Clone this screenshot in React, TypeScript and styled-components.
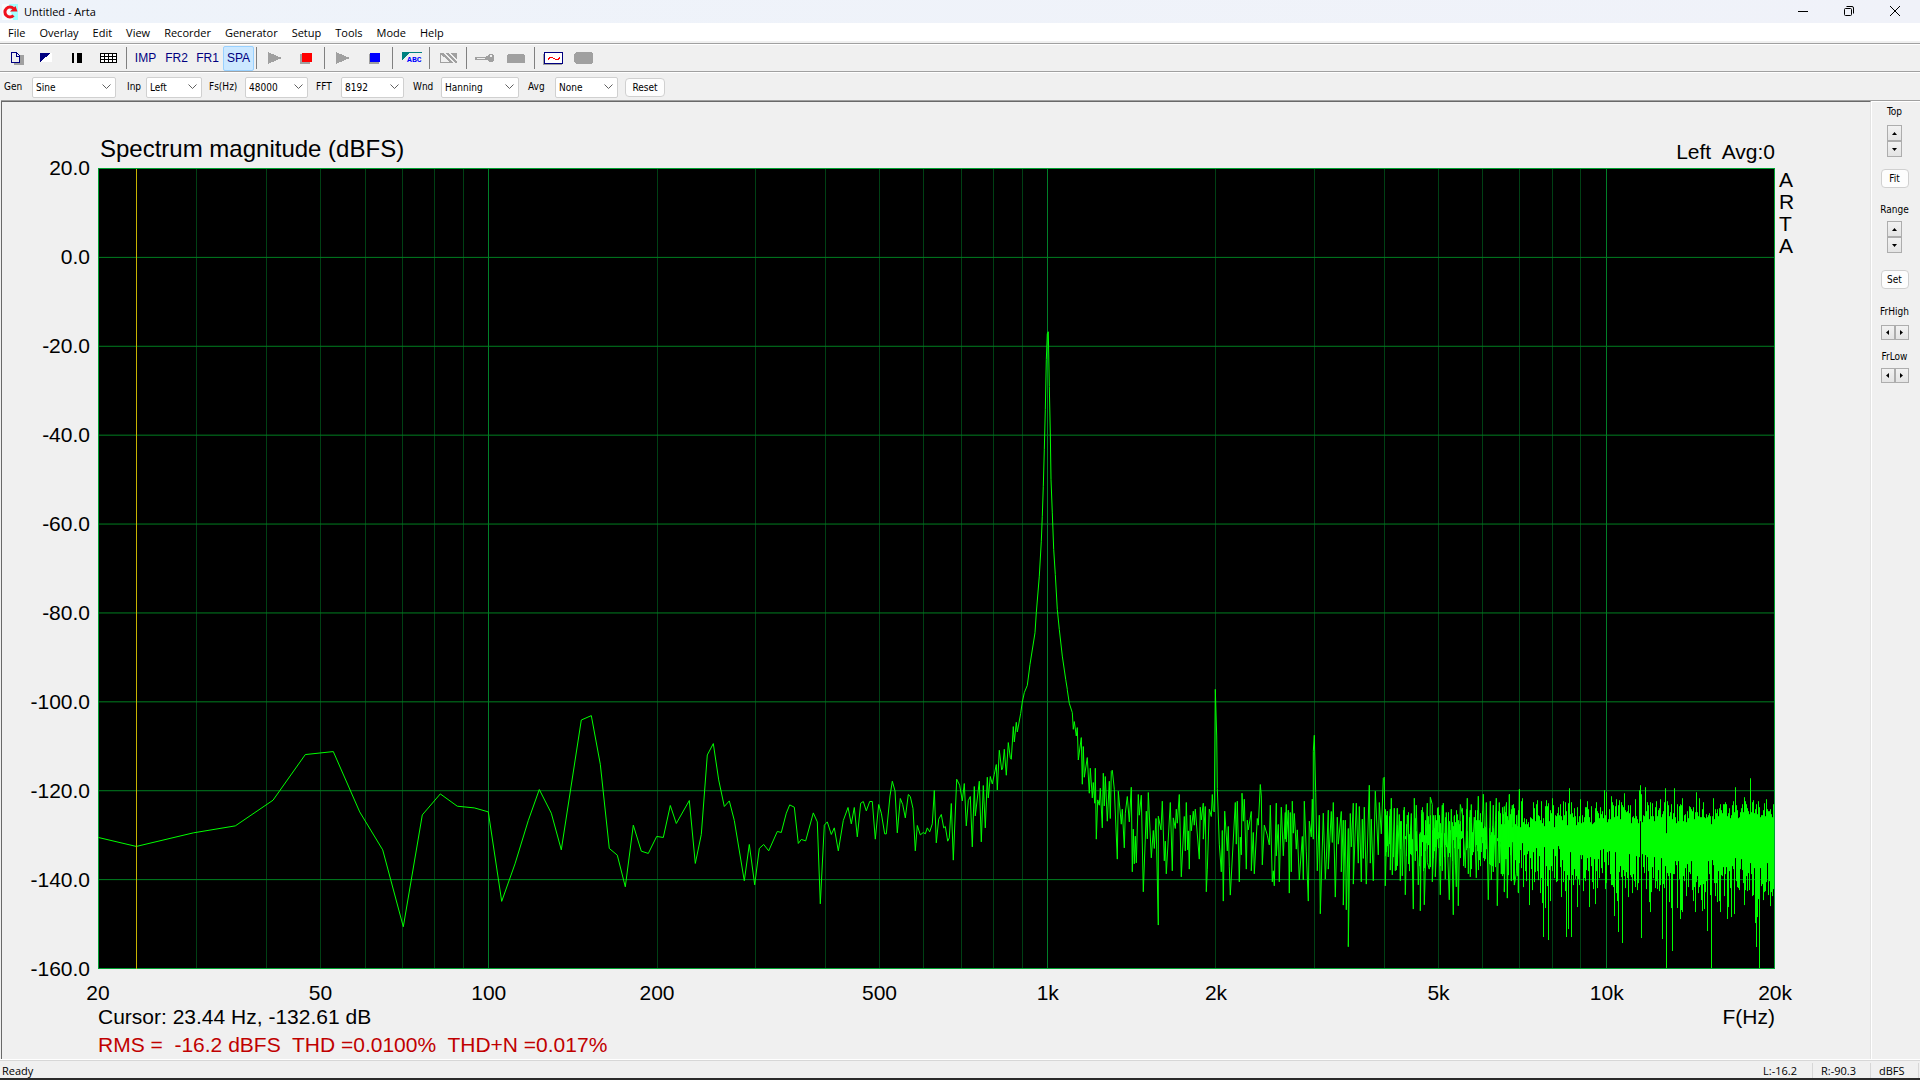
import React from "react";
import styled, { createGlobalStyle, css } from "styled-components";

const ui = `"Open Sans", "Noto Sans", sans-serif`;
const compact = `"DejaVu Sans Condensed", "DejaVu Sans", sans-serif`;
const chartFont = `"Liberation Sans", Arial, sans-serif`;

const Global = createGlobalStyle`
  * { box-sizing: border-box; }
  body { margin: 0; background: #f0f0f0; color: #000; font-family: ${ui}; }
  button, select { font: inherit; color: inherit; }
`;

/* ---------- window frame ---------- */

const Window = styled.div`
  display: flex;
  flex-direction: column;
  min-height: 100vh;
  border-bottom: 2px solid #2b2b2b;
  background: #f0f0f0;
`;

const TitleBar = styled.header`
  display: flex;
  align-items: center;
  height: 23px;
  padding: 0 2px;
  background: linear-gradient(90deg, #eef3fa, #f0f2f9);
`;

const Title = styled.h1`
  flex: 1;
  margin: 0;
  padding-left: 6px;
  font-size: 11px;
  font-weight: 400;
  line-height: 16px;
`;

const CaptionButton = styled.button`
  display: grid;
  place-items: center;
  width: 46px;
  height: 22px;
  padding: 0 0 2px;
  border: 0;
  background: transparent;
`;

const MenuBar = styled.nav`
  display: flex;
  height: 18px;
  padding-left: 1px;
  background: #fff;
`;

const MenuItem = styled.button`
  padding: 1px 7px 0;
  border: 0;
  background: transparent;
  font-size: 11px;
  line-height: 18px;
`;

/* ---------- toolbars ---------- */

const ToolBar = styled.div`
  display: flex;
  align-items: center;
  height: 28px;
  border-top: 1px solid #a0a0a0;
  box-shadow: inset 0 1px #fff;
`;

const IconBar = styled(ToolBar)`
  margin-top: 2px;
  padding-top: 1px;
`;

const ControlBar = styled(ToolBar)`
  height: 30px;
  padding: 1px 4px 0;
  font-family: ${compact};
  font-size: 10px;
`;

const ToolButton = styled.button<{ $active?: boolean }>`
  display: grid;
  place-items: center;
  width: 31px;
  height: 25px;
  padding: 0;
  border: 1px solid transparent;
  border-radius: 2px;
  background: transparent;
  color: #000080;
  font-family: ${chartFont};
  font-size: 12px;
  > svg { margin-right: 2px; }
  ${(p) =>
    p.$active &&
    css`
      border-color: #99d1ff;
      background: #cce8ff;
    `}
`;

const Separator = styled.i`
  width: 6px;
  height: 22px;
  background: linear-gradient(#808080, #808080) 2px 0 / 1px 100% no-repeat;
`;

const Field = styled.div<{ $lead: number }>`
  display: flex;
  align-items: center;
  margin-left: ${(p) => p.$lead}px;
`;

const FieldLabel = styled.label<{ $width: number }>`
  width: ${(p) => p.$width}px;
  padding-bottom: 1px;
  white-space: nowrap;
`;

const SelectBox = styled.span<{ $width: number }>`
  display: grid;
  width: ${(p) => p.$width}px;
  height: 21px;
  > * { grid-area: 1 / 1; }
  > svg { place-self: center end; margin-right: 5px; pointer-events: none; }
`;

const Select = styled.select`
  appearance: none;
  width: 100%;
  height: 100%;
  padding: 0 16px 0 3px;
  border: 1px solid #d0d0d0;
  border-radius: 2px;
  background: #fff;
`;

const PushButton = styled.button<{ $width: number }>`
  width: ${(p) => p.$width}px;
  height: 19px;
  padding: 0;
  border: 1px solid #d0d0d0;
  border-radius: 4px;
  background: #fdfdfd;
  font-family: ${compact};
  font-size: 10px;
`;

/* ---------- chart ---------- */

const Workspace = styled.div`
  display: flex;
  flex: 1;
`;

const ChartPanel = styled.main`
  display: grid;
  flex: 1;
  grid-template: 66px 1fr 90px / 96px 1fr 95px;
  margin-left: 1px;
  border: 1px solid #e3e3e3;
  border-top-color: #696969;
  border-left-color: #696969;
  box-shadow: 0 -1px #a0a0a0;
  font-family: ${chartFont};
  font-size: 21px;
  line-height: 22px;
`;

const ChartHeader = styled.div`
  grid-column: 2;
  display: flex;
  align-items: flex-end;
  justify-content: space-between;
  padding-bottom: 5px;
  white-space: pre;
`;

const ChartTitle = styled.h2`
  margin: 0;
  padding: 0 0 3px 2px;
  font-size: 24px;
  font-weight: 400;
`;

const YAxis = styled.div`
  grid-area: 2 / 1;
  display: flex;
  flex-direction: column;
  justify-content: space-between;
  margin: -11px 0;
  padding-right: 8px;
  text-align: right;
`;

const Plot = styled.svg`
  grid-area: 2 / 2;
  display: block;
  width: 100%;
  height: 100%;
  min-height: 0;
  background: #000;
  contain: size;
`;

const Brand = styled.div`
  grid-area: 2 / 3;
  display: flex;
  flex-direction: column;
  padding: 1px 4px;
`;

const ChartFooter = styled.div`
  grid-area: 3 / 2;
  display: flex;
  flex-direction: column;
  padding-top: 12px;
  line-height: 24px;
  white-space: pre;
`;

const XAxis = styled.div`
  display: flex;
`;

const Tick = styled.span<{ $grow: number }>`
  flex: ${(p) => p.$grow} 0 0;
  width: 0;
`;

const TickLabel = styled.span`
  display: flex;
  justify-content: center;
  width: 0;
`;

const Readout = styled.div`
  display: flex;
  justify-content: space-between;
`;

const Distortion = styled.div`
  margin-top: 4px;
  color: #c00000;
`;

/* ---------- side panel ---------- */

const SidePanel = styled.aside`
  display: flex;
  flex-direction: column;
  align-items: center;
  width: 49px;
  padding: 4px 3px 0 0;
  border-left: 1px solid #fff;
  border-bottom: 1px solid #a0a0a0;
  box-shadow: inset 0 1px #fff, 0 -1px #a0a0a0;
  font-family: ${compact};
  font-size: 10px;
  line-height: 14px;
`;

const SideLabel = styled.span<{ $top?: number }>`
  margin-top: ${(p) => p.$top ?? 0}px;
`;

const Spinner = styled.span<{ $row?: boolean; $top: number }>`
  display: flex;
  flex-direction: ${(p) => (p.$row ? "row" : "column")};
  margin-top: ${(p) => p.$top}px;
`;

const SpinButton = styled.button<{ $row?: boolean }>`
  display: grid;
  place-items: center;
  width: ${(p) => (p.$row ? 14 : 15)}px;
  height: ${(p) => (p.$row ? 15 : 16)}px;
  padding: 0;
  border: 1px solid #adadad;
  background: linear-gradient(#f2f2f2, #e4e4e4);
`;

const SideAction = styled.span<{ $top: number }>`
  display: flex;
  margin-top: ${(p) => p.$top}px;
`;

/* ---------- status bar ---------- */

const StatusBar = styled.footer`
  display: flex;
  height: 18px;
  padding: 2px 1px 0 2px;
  border-top: 1px solid #d7d7d7;
  box-shadow: 0 -1px #fff;
  font-size: 11px;
  line-height: 15px;
`;

const Ready = styled.span`
  flex: 1;
`;

const StatusCell = styled.span<{ $width: number }>`
  width: ${(p) => p.$width}px;
  padding-left: 8px;
  border-right: 1px solid #d7d7d7;
  white-space: nowrap;
`;

/* ---------- spectrum data ---------- */

const PLOT_W = 1677;
const PLOT_H = 802;
const SPAN = PLOT_W - 1;
const xOf = (f: number) => Math.round((Math.log10(f / 20) / 3) * SPAN) + 0.5;

type Sweep = { x: number; y: number; data: string };

// Each sweep lists x,y pairs in thirds of a plot unit from its own origin.
const sweeps: Sweep[] = [
  { x: -8, y: 512, data: "25,475 139,502 310,461 436,440 549,363 646,226 730,217 809,398 878,512 940,743 997,407 1051,344 1102,381 1153,386 1170,391" },
  { x: 382, y: 512, data: "0,391 25,398 65,667 105,554 145,424 178,331 214,402 244,512 304,122 334,109 361,255 388,508 412,528 436,623 460,438 484,516 505,523 530,472 550,475 571,379 589,433 628,364 646,553 664,466 682,227 700,193 716,302 733,382 748,365 763,424 793,605 808,496 824,617 838,508 851,496 866,515 892,457 904,460 919,402 929,377 943,384 955,493 964,481 977,485 1000,401 1012,428 1021,674 1033,438 1042,428" },
  { x: 732, y: 512, data: "4,466 13,446 25,515 40,424 54,385 64,434 73,385 82,473 92,372 100,367 109,395 119,367 127,367 136,480 146,376 154,402 164,464 169,464 180,350 187,306 195,335 202,461 211,358 218,376 226,416 235,346 241,352 249,388 256,515 262,439 271,467 280,460 286,464 292,446 299,458 307,434 313,334 319,491 326,420 334,406 341,446 346,442 353,486 358,476 364,373 370,543 380,300 389,318 397,365 403,313 409,440 415,364 421,352 427,503 433,322 436,410 448,306 454,488 460,319 466,446 472,294 475,356 481,292 487,314 493,285 499,256 502,332 508,213 515,272 518,266 523,210 529,288 535,190 541,235 544,240 550,142 553,188 559,129 562,158 572,102 577,68 583,40" },
  { x: 882, y: 132, data: "142,1158 150,1095 165,1000 169,940 178,830 184,725 187,650 190,560 193,450 196,330 199,180 202,102 205,96 208,260 211,400 213,540 217,640 221,750 226,825 232,930 238,990 247,1070 257,1140 262,1170" },
  { x: 732, y: 512, data: "712,32 718,72 727,100 730,150 733,127 739,170 742,145 745,242 754,175 757,315 760,202 763,294 772,235 778,342 781,267 787,356 790,310 794,372 796,267 799,480 803,362 808,378 811,327 817,446 820,282 823,380 826,292 832,426 838,306 841,418 844,276 847,273 853,330 862,540 865,336 874,435 877,390 883,506 886,402 892,352 898,428 904,324 907,578 910,450 913,554 916,471 919,551 925,346 928,408 934,348 940,638 949,396 952,479 955,340 964,536 970,454 973,508 978,418 985,738 985,411 993,452 997,366 1003,545 1006,486 1009,584 1021,370 1027,575 1030,416 1036,448 1039,390 1042,432 1048,346 1054,593 1063,412 1066,515 1069,370 1073,512 1075,455 1078,570 1081,408 1084,455 1090,396 1093,438 1096,390 1108,540 1111,384 1114,422 1120,372 1120,480 1126,382 1129,638 1132,572 1138,390 1144,412 1147,346 1150,395 1153,398 1156,30 1160,170 1162,328 1168,495 1174,578 1177,454 1180,666 1184,396 1192,515 1195,442 1198,563" },
  { x: 1122, y: 532, data: "31,588 46,310 49,435 52,306 58,548 61,414 64,467 66,282 70,366 73,300 79,510 82,363 85,392 94,337 94,515 100,400 103,524 112,358 115,378 121,256 124,290 127,497 133,378 142,408 148,437 151,318 157,548 160,515 163,560 169,312 169,470 175,376 178,548 184,324 190,470 196,340 196,420 199,316 199,428 205,333 208,582 211,340 214,518 217,306 220,402 223,343 229,450 232,392 238,542 247,412 250,542 253,306 259,458 265,606 268,366 274,413 277,300 280,420 280,156 283,108 287,280 292,515 298,348 301,644 310,342 316,540 319,480 325,333 325,510 334,337 337,430 340,310 346,594 352,354 355,435 364,337 364,518 370,363 370,618 376,363 379,632 385,388 385,743 391,343 394,443 400,312 400,555 409,312 415,492 418,322 424,548 427,360 430,478 433,324 439,555 448,258 451,492 454,360 460,545 466,276 475,467 478,310 484,404 490,237 493,234 496,560 502,336 505,473 511,330 511,513 514,297 517,527 523,327 526,515 532,327 532,500 538,346 541,545 544,366 547,530 553,324 556,587 562,348 568,460 574,343 580,630 583,297 586,485 589,318 595,557 601,400 601,635 605,333 610,340 613,617 622,312 622,490 628,510 631,294 637,316 637,548 646,348 646,533 655,324 661,587 667,318 667,515 670,312 676,540 679,340 688,602 694,330 700,647 703,352 706,488 709,563 712,346 715,620 721,316 727,345 736,506 742,297 745,524 751,333 751,533 754,316 757,467 763,354 769,536 775,291 778,443 784,458 790,285 796,480 799,310 805,602 811,306 814,542 820,318 820,518 829,297 832,620 838,310 844,524 853,322 853,578 859,316 862,597 868,286 874,545 877,318 883,557 889,524 895,346 895,580 898,270" },
];

const trace = sweeps
  .flatMap((s) =>
    s.data.split(" ").map((pair) => {
      const [px, py] = pair.split(",").map(Number);
      return `${(s.x + px / 3).toFixed(1)},${(s.y + py / 3).toFixed(1)}`;
    })
  )
  .join(" ");

// Peaks and dips that stand out of the dense noise floor, same units as the sweeps.
const floorOrigin = { x: 1402, y: 572 };
const pairs = (s: string) =>
  new Map(s.split(" ").map((p) => p.split(",").map(Number)).map(([a, b]) => [Math.floor(a / 3), b / 3] as [number, number]));
const peaks = pairs("28,165 58,150 67,178 112,183 139,183 157,178 208,147 214,189 241,180 262,186 313,153 319,159 334,171 349,180 358,184 373,162 406,180 418,153 421,138 424,165 436,144 481,180 496,147 499,282 523,147 547,178 589,159 598,178 634,255 640,178 706,144 733,175 751,117 760,183 799,180");
const dips = pairs("4,404 13,458 22,476 34,426 43,438 55,461 70,443 88,497 97,453 121,461 127,492 130,594 136,506 142,441 145,602 151,486 184,473 196,456 199,594 205,570 214,594 233,503 250,456 268,503 280,450 286,495 292,447 334,438 343,530 349,462 352,486 355,578 367,612 385,473 397,461 421,246 424,597 439,450 448,488 450,518 472,450 487,600 499,687 508,488 514,506 517,636 532,506 541,540 544,513 547,518 559,470 580,486 586,518 604,483 608,515 613,510 622,576 631,467 634,687 646,470 652,488 658,486 661,518 682,540 685,504 694,533 703,525 715,447 733,497 742,456 757,470 766,552 769,624 772,534 778,687 790,483 793,458 805,467 811,500 820,450");

function noiseFloor() {
  let seed = 8192;
  const rnd = () => {
    seed = (seed * 16807) % 2147483647;
    return seed / 2147483647;
  };
  let d = "";
  for (let x = 1287; x < floorOrigin.x; x++) {
    const top = 640 + rnd() * 32;
    const bottom = 670 + rnd() * 34;
    if (rnd() > 0.25) d += `M${x}.5 ${top.toFixed(0)}V${bottom.toFixed(0)}`;
  }
  for (let i = 0; i + floorOrigin.x < SPAN; i++) {
    const dense = i / 274;
    const top = peaks.get(i) ?? 62 + rnd() * (28 - dense * 10);
    const bottom = dips.get(i) ?? 102 + dense * 20 + rnd() * 40;
    d += `M${floorOrigin.x + i}.5 ${(floorOrigin.y + top).toFixed(0)}V${(floorOrigin.y + bottom).toFixed(0)}`;
  }
  return d;
}
const floorPath = noiseFloor();

const gridFreqs = [10, 100, 1000, 10000].flatMap((b) => [1, 2, 3, 4, 5, 6, 7, 8, 9].map((m) => b * m)).filter((f) => f > 20 && f < 20000);
const isDecade = (f: number) => Number.isInteger(Math.log10(f));
const levels = [20, 0, -20, -40, -60, -80, -100, -120, -140, -160];
const yOf = (db: number) => Math.round(((20 - db) / 180) * (PLOT_H - 1)) + 0.5;

const ticks: [number, string][] = [[20, "20"], [50, "50"], [100, "100"], [200, "200"], [500, "500"], [1000, "1k"], [2000, "2k"], [5000, "5k"], [10000, "10k"], [20000, "20k"]];

function SpectrumPlot() {
  return (
    <Plot viewBox={`0 0 ${PLOT_W} ${PLOT_H}`} preserveAspectRatio="none" shapeRendering="crispEdges" fill="none" role="img" aria-label="Spectrum magnitude">
      {gridFreqs.filter((f) => !isDecade(f)).map((f) => (
        <path key={f} d={`M${xOf(f)} 0V${PLOT_H}`} stroke="#004014" />
      ))}
      {gridFreqs.filter(isDecade).map((f) => (
        <path key={f} d={`M${xOf(f)} 0V${PLOT_H}`} stroke="#008028" />
      ))}
      {levels.slice(1, -1).map((db) => (
        <path key={db} d={`M0 ${yOf(db)}H${PLOT_W}`} stroke="#008020" />
      ))}
      <rect x="0.5" y="0.5" width={PLOT_W - 1} height={PLOT_H - 1} stroke="#00a030" />
      <polyline points={trace} stroke="#00ff00" />
      <path d={floorPath} stroke="#00ff00" />
      <path d={`M${xOf(23.4)} 1V${PLOT_H}`} stroke="#c8b400" />
    </Plot>
  );
}

/* ---------- icons ---------- */

const Glyph = ({ children }: { children: React.ReactNode }) => (
  <svg width="24" height="16" viewBox="0 0 24 16" fill="none" shapeRendering="crispEdges" aria-hidden="true">
    {children}
  </svg>
);

const icons = {
  copy: (
    <Glyph>
      <path d="M11 5h10v10H11z" fill="#a0a0a0" />
      <path d="M8.500 2.500h5l3 3v7h-8z" fill="#f0f0f0" stroke="#000080" />
      <path d="M13.500 2.500v3.500h3" stroke="#000080" />
    </Glyph>
  ),
  contrast: (
    <Glyph>
      <path d="M6 3h12v9H6z" fill="#fff" />
      <path d="M6 3h11L6 12z" fill="#000080" />
    </Glyph>
  ),
  pause: (
    <Glyph>
      <path d="M7 3h2v10H7zM12 3h5v10h-5z" fill="#000" />
    </Glyph>
  ),
  table: (
    <Glyph>
      <path d="M4 3h17v10H4z" fill="#fff" />
      <path d="M4.500 3.500h16v9h-16zM4 6.500h17M4 9.500h17M8.500 3v10M12.500 3v10M16.500 3v10" stroke="#000" />
    </Glyph>
  ),
  play: (
    <Glyph>
      <path d="M5 2l14 6-14 6z" fill="#a0a0a0" />
    </Glyph>
  ),
  record: (
    <Glyph>
      <path d="M6 4h10v10H6z" fill="#a0a0a0" />
      <path d="M8 3h10v9H8z" fill="#f00" />
    </Glyph>
  ),
  stop: (
    <Glyph>
      <path d="M7 4h10v10H7z" fill="#a0a0a0" />
      <path d="M8 3h10v9H8z" fill="#00f" />
    </Glyph>
  ),
  hatch: (
    <Glyph>
      <path d="M4.500 3.500v9h11z" stroke="#a0a0a0" />
      <path d="M4 3h3l11 10h-3zM9 3h3l9 9v1h-2zM14 3h7v7z" fill="#a0a0a0" />
    </Glyph>
  ),
  key: (
    <Glyph>
      <path d="M2 7h11v3H2zM13 6h2l1-2h4l1 2v4l-2 2h-3l-2-2h-1z" fill="#a0a0a0" />
      <path d="M4 8h8v1H4zM17 5h2v2h-2z" fill="#f0f0f0" />
    </Glyph>
  ),
  block: (
    <Glyph>
      <path d="M3 5l1-1h15l2 1v8H3z" fill="#a0a0a0" />
    </Glyph>
  ),
  wave: (
    <Glyph>
      <path d="M2 4h2v10h17v1H2z" fill="#a0a0a0" />
      <rect x="3.500" y="2.500" width="18" height="11" rx="1" fill="#fff" stroke="#000080" />
      <path d="M7 9.500l2-2h2l4 2h2l2-2" stroke="#f00" strokeWidth="1" />
    </Glyph>
  ),
  pill: (
    <Glyph>
      <path d="M4 2h15l2 2v8l-2 2H4l-2-2V4z" fill="#a0a0a0" />
    </Glyph>
  ),
};

const AbcMark = styled.span`
  display: grid;
  place-items: end;
  width: 20px;
  height: 12px;
  border-top: 1px solid #008080;
  background: linear-gradient(135deg, #008080 0 5px, transparent 5px);
  color: #00f;
  font-family: "Liberation Mono", monospace;
  font-size: 8px;
  font-weight: 700;
  line-height: 9px;
`;

const Chevron = () => (
  <svg width="9" height="6" viewBox="0 0 9 6" fill="none" stroke="#606060" aria-hidden="true">
    <path d="M0.500 0.500l4 4 4-4" />
  </svg>
);

const arrows = {
  up: "M0 4h5L2.500 1z",
  down: "M0 1h5L2.500 4z",
  left: "M4 0v5L1 2.500z",
  right: "M1 0v5l3-2.500z",
};

const Arrow = ({ dir }: { dir: keyof typeof arrows }) => (
  <svg width="5" height="5" viewBox="0 0 5 5" aria-hidden="true">
    <path d={arrows[dir]} fill="#000" />
  </svg>
);

const Logo = () => (
  <svg width="16" height="16" viewBox="0 0 16 16" aria-hidden="true">
    <path d="M0 0h16v16H0z" fill="#f6fbfd" />
    <path d="M7 0h9v16h-5z" fill="#a0ffff" />
    <path d="M11.500 11.500a5 5 0 1 1 0-7" fill="none" stroke="#f0101c" strokeWidth="3" />
    <path d="M8 7.500h7.500l-2-5.500z" fill="#f0101c" />
  </svg>
);

/* ---------- composition ---------- */

function SelectField({ id, label, value, lead, labelWidth, width }: { id: string; label: string; value: string; lead: number; labelWidth: number; width: number }) {
  return (
    <Field $lead={lead}>
      <FieldLabel htmlFor={id} $width={labelWidth}>{label}</FieldLabel>
      <SelectBox $width={width}>
        <Select id={id} defaultValue={value}>
          <option>{value}</option>
        </Select>
        <Chevron />
      </SelectBox>
    </Field>
  );
}

function Spin({ name, row, top }: { name: string; row?: boolean; top: number }) {
  const dirs: (keyof typeof arrows)[] = row ? ["left", "right"] : ["up", "down"];
  return (
    <Spinner $row={row} $top={top}>
      {dirs.map((d) => (
        <SpinButton key={d} $row={row} aria-label={`${name} ${d}`}>
          <Arrow dir={d} />
        </SpinButton>
      ))}
    </Spinner>
  );
}

const menus = ["File", "Overlay", "Edit", "View", "Recorder", "Generator", "Setup", "Tools", "Mode", "Help"];
const modes = ["IMP", "FR2", "FR1", "SPA"];

export default function App() {
  return (
    <Window>
      <Global />
      <TitleBar>
        <Logo />
        <Title>Untitled - Arta</Title>
        <CaptionButton aria-label="Minimize">
          <svg width="10" height="10" viewBox="0 0 10 10" stroke="#000" fill="none"><path d="M0 5.500h10" /></svg>
        </CaptionButton>
        <CaptionButton aria-label="Restore">
          <svg width="10" height="10" viewBox="0 0 10 10" stroke="#000" fill="none">
            <rect x="0.500" y="2.500" width="7" height="7" rx="1" />
            <path d="M2.500 0.500h5.500a1.500 1.500 0 0 1 1.500 1.500v5.500" />
          </svg>
        </CaptionButton>
        <CaptionButton aria-label="Close">
          <svg width="10" height="10" viewBox="0 0 10 10" stroke="#000" fill="none"><path d="M0 0l10 10M10 0L0 10" /></svg>
        </CaptionButton>
      </TitleBar>
      <MenuBar>
        {menus.map((m) => (
          <MenuItem key={m}>{m}</MenuItem>
        ))}
      </MenuBar>

      <IconBar>
        <ToolButton aria-label="Copy">{icons.copy}</ToolButton>
        <ToolButton aria-label="Background">{icons.contrast}</ToolButton>
        <ToolButton aria-label="Line width">{icons.pause}</ToolButton>
        <ToolButton aria-label="Grid">{icons.table}</ToolButton>
        <Separator />
        {modes.map((m) => (
          <ToolButton key={m} $active={m === "SPA"}>{m}</ToolButton>
        ))}
        <Separator />
        <ToolButton aria-label="Start recording">{icons.play}</ToolButton>
        <ToolButton aria-label="Stop recording">{icons.record}</ToolButton>
        <Separator />
        <ToolButton aria-label="Start generator">{icons.play}</ToolButton>
        <ToolButton aria-label="Stop generator">{icons.stop}</ToolButton>
        <Separator />
        <ToolButton><AbcMark>ABC</AbcMark></ToolButton>
        <Separator />
        <ToolButton aria-label="Overlay">{icons.hatch}</ToolButton>
        <Separator />
        <ToolButton aria-label="Calibrate">{icons.key}</ToolButton>
        <ToolButton aria-label="Device">{icons.block}</ToolButton>
        <Separator />
        <ToolButton aria-label="Signal">{icons.wave}</ToolButton>
        <ToolButton aria-label="Scope">{icons.pill}</ToolButton>
      </IconBar>

      <ControlBar>
        <SelectField id="gen" label="Gen" value="Sine" lead={0} labelWidth={28} width={84} />
        <SelectField id="inp" label="Inp" value="Left" lead={11} labelWidth={19} width={56} />
        <SelectField id="fs" label="Fs(Hz)" value="48000" lead={7} labelWidth={36} width={63} />
        <SelectField id="fft" label="FFT" value="8192" lead={8} labelWidth={25} width={63} />
        <SelectField id="wnd" label="Wnd" value="Hanning" lead={9} labelWidth={28} width={78} />
        <SelectField id="avg" label="Avg" value="None" lead={9} labelWidth={27} width={63} />
        <Field $lead={7}>
          <PushButton $width={40}>Reset</PushButton>
        </Field>
      </ControlBar>

      <Workspace>
        <ChartPanel>
          <ChartHeader>
            <ChartTitle>Spectrum magnitude (dBFS)</ChartTitle>
            <span>{"Left  Avg:0"}</span>
          </ChartHeader>
          <YAxis>
            {levels.map((db) => (
              <span key={db}>{db.toFixed(1)}</span>
            ))}
          </YAxis>
          <SpectrumPlot />
          <Brand>
            {["A", "R", "T", "A"].map((c, i) => (
              <span key={i}>{c}</span>
            ))}
          </Brand>
          <ChartFooter>
            <XAxis>
              {ticks.map(([f, text], i) => (
                <Tick key={f} $grow={i < ticks.length - 1 ? Math.log10(ticks[i + 1][0] / f) : 0}>
                  <TickLabel>{text}</TickLabel>
                </Tick>
              ))}
            </XAxis>
            <Readout>
              <span>Cursor: 23.44 Hz, -132.61 dB</span>
              <span>F(Hz)</span>
            </Readout>
            <Distortion>{"RMS =  -16.2 dBFS  THD =0.0100%  THD+N =0.017%"}</Distortion>
          </ChartFooter>
        </ChartPanel>

        <SidePanel>
          <SideLabel>Top</SideLabel>
          <Spin name="Top" top={6} />
          <SideAction $top={12}><PushButton $width={28}>Fit</PushButton></SideAction>
          <SideLabel $top={15}>Range</SideLabel>
          <Spin name="Range" top={4} />
          <SideAction $top={17}><PushButton $width={28}>Set</PushButton></SideAction>
          <SideLabel $top={16}>FrHigh</SideLabel>
          <Spin name="FrHigh" row top={6} />
          <SideLabel $top={10}>FrLow</SideLabel>
          <Spin name="FrLow" row top={4} />
        </SidePanel>
      </Workspace>

      <StatusBar>
        <Ready>Ready</Ready>
        <StatusCell $width={58}>L:-16.2</StatusCell>
        <StatusCell $width={58}>R:-90.3</StatusCell>
        <StatusCell $width={48}>dBFS</StatusCell>
      </StatusBar>
    </Window>
  );
}
